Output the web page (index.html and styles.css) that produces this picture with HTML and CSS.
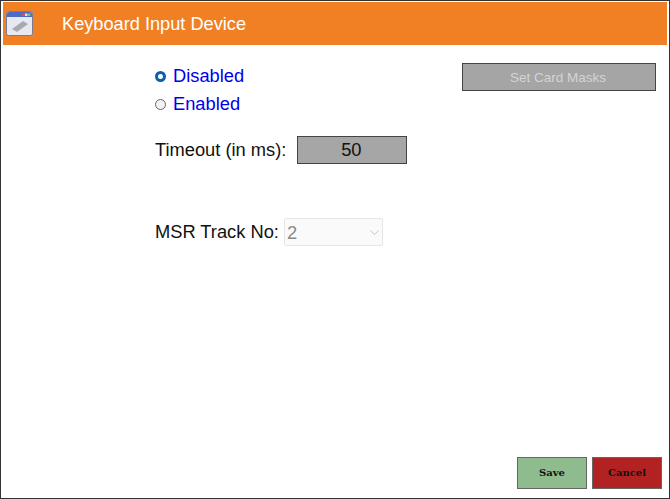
FILE: index.html
```html
<!DOCTYPE html>
<html lang="en">
<head>
    <meta charset="UTF-8">
    <meta name="viewport" content="width=device-width, initial-scale=1.0">
    <title>Keyboard Input Device</title>
    <link rel="stylesheet" href="styles.css">
</head>
<body>
    <div class="window">
        <header class="title-bar">
            <svg class="title-icon" width="27" height="25" viewBox="0 0 27 25">
                <rect x="0.5" y="0.5" width="26" height="24" rx="2" fill="#e6e8f2" stroke="#777c92"/>
                <path d="M1 3 a2 2 0 0 1 2 -2 h21 a2 2 0 0 1 2 2 v3 h-25 z" fill="#4a6cc8"/>
                <rect x="16" y="2.5" width="3" height="2.5" fill="#d8504c"/>
                <rect x="19" y="2.5" width="2.5" height="2.5" fill="#e6e6cc"/>
                <rect x="21.5" y="2.5" width="3" height="2.5" fill="#86b878"/>
                <path d="M6 18 L17 10 L22 13 L11 21 z" fill="#a8aaae"/>
            </svg>
            <h1>Keyboard Input Device</h1>
        </header>
        <main class="content">
            <div class="top-row">
                <div class="radio-group">
                    <label class="radio-label"><input type="radio" name="state" checked> Disabled</label>
                    <label class="radio-label"><input type="radio" name="state"> Enabled</label>
                </div>
                <button class="masks-btn" type="button" disabled>Set Card Masks</button>
            </div>
            <div class="form-row timeout-row">
                <label for="timeout">Timeout (in ms):</label>
                <input type="text" id="timeout" class="timeout-input" value="50">
            </div>
            <div class="form-row track-row">
                <label for="track">MSR Track No:</label>
                <div class="select-wrap">
                    <select id="track" class="track-select" disabled>
                        <option>2</option>
                    </select>
                    <svg class="select-arrow" width="9" height="5" viewBox="0 0 9 5">
                        <path d="M0.5 0.5 L4.5 4.5 L8.5 0.5" fill="none" stroke="#c4c4c4"/>
                    </svg>
                </div>
            </div>
        </main>
        <footer class="actions">
            <button class="action-btn save-btn" type="button">Save</button>
            <button class="action-btn cancel-btn" type="button">Cancel</button>
        </footer>
    </div>
</body>
</html>
```

FILE: styles.css
```css
* {
    box-sizing: border-box;
}

html, body {
    margin: 0;
    padding: 0;
    height: 100%;
    background: #fff;
}

body {
    font-family: "Liberation Sans", Arial, sans-serif;
    color: #111;
}

.window {
    width: 670px;
    height: 499px;
    border: 1px solid #333;
    padding: 1px 2px 0 1px;
    display: flex;
    flex-direction: column;
    background: #fff;
}

.title-bar {
    height: 43px;
    margin-left: 1px;
    background: #f18024;
    display: flex;
    align-items: center;
    padding-left: 3px;
    flex-shrink: 0;
}

.title-icon {
    flex-shrink: 0;
}

.title-bar h1 {
    margin: 1px 0 0 29px;
    font-size: 18.2px;
    font-weight: normal;
    color: #fff;
}

.content {
    flex: 1;
    padding: 18px 11px 0 153px;
}

.top-row {
    display: flex;
    justify-content: space-between;
    align-items: flex-start;
}

.radio-group {
    display: flex;
    flex-direction: column;
    gap: 8px;
    margin-top: 3px;
}

.radio-label {
    display: flex;
    align-items: center;
    height: 20px;
    font-size: 18.3px;
    color: #0000ee;
}

.radio-label input {
    appearance: none;
    width: 11px;
    height: 11px;
    margin: 0 7px 0 0;
    border: 1px solid #666;
    border-radius: 50%;
    background: #f2f2f2;
}

.radio-label input:checked {
    border: 3.5px solid #0a5fb4;
    background: #fff;
}

.masks-btn {
    width: 194px;
    height: 28px;
    padding: 0 8px 0 6px;
    background: #a5a5a5;
    border: 1px solid #444;
    color: #d4d4d4;
    font-family: "Liberation Sans", Arial, sans-serif;
    font-size: 13.5px;
}

.form-row {
    display: flex;
    align-items: center;
    font-size: 18.3px;
}

.timeout-row {
    margin-top: 22px;
}

.timeout-input {
    width: 110px;
    height: 28px;
    margin-left: 11px;
    padding: 0 2px 0 0;
    background: #a6a6a6;
    border: 1px solid #444;
    font-family: "Liberation Sans", Arial, sans-serif;
    font-size: 18.3px;
    color: #111;
    text-align: center;
}

.track-row {
    margin-top: 54px;
}

.select-wrap {
    position: relative;
    margin-left: 5px;
}

.track-select {
    display: block;
    appearance: none;
    width: 99px;
    height: 28px;
    padding: 0 0 0 2px;
    background: #fafafa;
    border: 1px solid #e6e6e6;
    border-radius: 2px;
    color: #8a8a8a;
    opacity: 1;
    font-family: "Liberation Sans", Arial, sans-serif;
    font-size: 18.3px;
}

.select-arrow {
    position: absolute;
    right: 4px;
    top: 12px;
}

.actions {
    display: flex;
    justify-content: flex-end;
    gap: 5px;
    padding: 0 5px 9px 0;
}

.action-btn {
    width: 70px;
    height: 32px;
    padding: 0 0 2px;
    border: 1px solid #666;
    font-family: "DejaVu Serif", serif;
    font-size: 10px;
    font-weight: bold;
    color: #111;
}

.save-btn {
    background: #8fbc8f;
}

.cancel-btn {
    background: #b22222;
}
```
